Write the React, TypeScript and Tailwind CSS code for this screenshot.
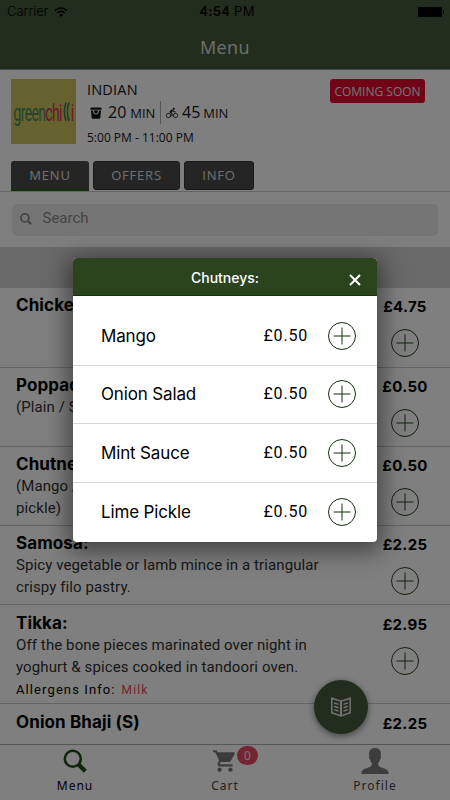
import { MdDirectionsBike, MdShoppingCart } from "react-icons/md";

type MenuItem = {
  name: string;
  price: string;
  lines: string[];
  allergens?: string;
  height: string;
};

const MENU_ITEMS: MenuItem[] = [
  { name: "Chicken Tikka:", price: "£4.75", lines: [], height: "h-[79.3px]" },
  { name: "Poppadom:", price: "£0.50", lines: ["(Plain / Spicy)"], height: "h-[79.3px]" },
  { name: "Chutneys:", price: "£0.50", lines: ["(Mango / Onion / Mint / Lime", "pickle)"], height: "h-[79.3px]" },
  {
    name: "Samosa:",
    price: "£2.25",
    lines: ["Spicy vegetable or lamb mince in a triangular", "crispy filo pastry."],
    height: "h-[79.3px]",
  },
  {
    name: "Tikka:",
    price: "£2.95",
    lines: ["Off the bone pieces marinated over night in", "yoghurt & spices cooked in tandoori oven."],
    allergens: "Milk",
    height: "h-[99px]",
  },
  { name: "Onion Bhaji (S)", price: "£2.25", lines: [], height: "h-[50px]" },
];

const CHUTNEYS = ["Mango", "Onion Salad", "Mint Sauce", "Lime Pickle"];

const PlusCircle = ({ className }: { className?: string }) => (
  <svg viewBox="0 0 28 28" className={`size-7 shrink-0 ${className ?? ""}`} fill="none" stroke="currentColor">
    <circle cx="14" cy="14" r="13.5" />
    <path d="M14 5.5v17M5.5 14h17" />
  </svg>
);

const WifiIcon = () => (
  <svg viewBox="0 0 14 10" className="h-[10px] w-[14px]" fill="none" stroke="black" strokeWidth="1.500">
    <path d="M1 3.600Q7-1.500 13 3.600M3.200 6q3.800-3.200 7.600 0" />
    <path d="M5 7.800q2-1.400 4 0L7 9.900z" fill="black" stroke="none" />
  </svg>
);

const BasketIcon = () => (
  <svg viewBox="0 0 12 12" className="size-3" fill="none">
    <path d="M.5 1.2Q.5.5 1.5.5h9q1 0 1 .7v1.6H.5z" fill="#111" />
    <path d="M1 3.5h10L10.3 11q-.1.8-1 .8H2.700q-.9 0-1-.8z" fill="#111" />
    <path d="M3.500 3.200Q3.500 7 6 7t2.500-3.800" stroke="#eee" strokeWidth="1.100" />
  </svg>
);

const MagnifierIcon = ({ className, ring = 2.5 }: { className?: string; ring?: number }) => (
  <svg viewBox="0 0 24 24" className={className} fill="none" stroke="currentColor">
    <circle cx="9.800" cy="9.800" r="8" strokeWidth={ring} />
    <path d="M15.300 15.300 22.300 22.300" strokeWidth="4.200" />
  </svg>
);

const PersonIcon = () => (
  <svg viewBox="0 0 28 26" className="h-[26px] w-7" fill="#7a7a7a">
    <path d="M14 0c3.700 0 6 2.200 5.900 5.800 0 1-.2 1.900-.1 2.400.5.500.2 2.200-.6 3-.4 1.600-1 2.700-1.900 3.600-.2 1.600 0 2.800 1 3.600 2.200 1.600 6.100 1.900 7.900 3.500 1 .9 1.400 2.300 1.500 4.100H.3c.1-1.800.5-3.200 1.500-4.100 1.800-1.600 5.700-1.900 7.900-3.500 1-.8 1.200-2 1-3.600-.9-.9-1.500-2-1.900-3.600-.8-.8-1.100-2.500-.6-3 .1-.5-.1-1.400-.1-2.400C8 2.200 10.300 0 14 0z" />
  </svg>
);

const BookIcon = () => (
  <svg viewBox="0 0 20 20" className="size-5" fill="none" stroke="#e6e6e6" strokeWidth="1.500">
    <path d="M.8 1.200 10 4.200l9.200-3v14.600L10 19 .8 15.800z" />
    <path d="M10 4.200V19" strokeWidth="2" />
    <path d="m3.200 6 4.300 1.400M3.200 9.300l4.300 1.400M3.200 12.600 7.500 14M16.800 6l-4.300 1.400M16.800 9.300l-4.300 1.400M16.800 12.600 12.500 14" />
  </svg>
);

const StatusBar = () => (
  <div className="grid h-[23px] grid-cols-3 items-center pl-[7px] pr-[6px] font-[Inter,sans-serif] text-[13px] text-black">
    <div className="flex items-center gap-[6px]">
      <span className="font-light">Carrier</span>
      <WifiIcon />
    </div>
    <div className="pl-[3px] text-center tracking-[0.3px]">
      <span className="font-semibold">4:54</span> PM
    </div>
    <div className="flex items-center justify-end gap-px">
      <div className="h-[10px] w-6 rounded-[1px] bg-black" />
      <div className="h-1 w-px rounded-r bg-black" />
    </div>
  </div>
);

const Logo = () => (
  <div className="flex h-[65px] w-[65px] shrink-0 items-center justify-center overflow-hidden bg-[#cac55e]">
    <div className="flex scale-y-[1.7] items-center font-[Roboto,sans-serif] text-[14px] leading-none tracking-[-0.650px]">
      <span className="text-[#4c8460]">green</span>
      <span className="text-[#d3324e]">chi</span>
      <svg viewBox="0 0 8 14" className="mx-px h-[12px] w-[7px]" fill="none" strokeWidth="1.800">
        <path d="M3.500.5Q-.5 7 3.500 13M7 .5Q3 7 7 13" stroke="#3c7858" />
      </svg>
      <span className="text-[#d3324e]">i</span>
    </div>
  </div>
);

const Restaurant = () => (
  <section className="flex h-[91px] items-start px-[11px] pt-[9px] font-['Open_Sans',sans-serif] text-[#151515]">
    <Logo />
    <div className="ml-[11px] flex-1">
      <div className="h-[22px] text-[14.5px] leading-[22px] tracking-[0.2px]">INDIAN</div>
      <div className="flex h-[23px] items-center text-[16px] leading-[23px]">
        <span className="ml-[3px]"><BasketIcon /></span>
        <span className="ml-[6px] flex w-[47px] items-baseline gap-1">20 <small className="text-[13px]">MIN</small></span>
        <span className="ml-[5px] h-[23px] w-px bg-[#aaa]" />
        <span className="ml-[5px]"><MdDirectionsBike size={12} /></span>
        <span className="ml-[4px] flex items-baseline gap-[3px]">45 <small className="text-[13px]">MIN</small></span>
      </div>
      <div className="mt-[3px] h-[22px] text-[12px] leading-[22px]">5:00 PM - 11:00 PM</div>
    </div>
    <div className="mr-[14px] flex h-6 w-[95px] items-center justify-center rounded-[3px] bg-[#e00b30] pt-px text-[12px] text-[#e8e8e8]">
      COMING SOON
    </div>
  </section>
);

const MenuRow = ({ item }: { item: MenuItem }) => (
  <div className={`flex shrink-0 justify-between overflow-hidden border-b border-[#c8c8c8] pl-4 pr-[23px] ${item.height}`}>
    <div className="whitespace-nowrap">
      <div className="mt-[6.200px] h-[22px] font-[Inter,sans-serif] text-[17px] font-bold leading-[22px] tracking-[0.1px] text-black">
        {item.name}
      </div>
      {item.lines.map((line) => (
        <div key={line} className="h-[22px] font-[Roboto,sans-serif] text-[15px] leading-[22px] tracking-[0.1px] text-[#303030]">
          {line}
        </div>
      ))}
      {item.allergens && (
        <div className="flex items-center gap-[6px] pt-px font-[Roboto,sans-serif] text-[13px] leading-[22px] tracking-[1.1px] text-black">
          Allergens Info: <span className="text-[12px] text-[#e8465a]">{item.allergens}</span>
        </div>
      )}
    </div>
    <div className="flex w-11 flex-col items-center font-[Inter,sans-serif]">
      <div className="mt-[9.200px] h-[20px] text-[15px] font-bold leading-[20px] tracking-[0.3px] text-black">{item.price}</div>
      <PlusCircle className="mt-[12px] text-[#21401a]" />
    </div>
  </div>
);

const ChutneyModal = () => (
  <div className="h-[284px] w-[304px] overflow-hidden rounded-[4px] bg-white shadow-[0_5px_24px_4px_rgba(0,0,0,0.5)]">
    <div className="grid h-[38px] grid-cols-[44px_1fr_44px] items-center border-b border-[#12340c] bg-[#2b441e] text-white">
      <span />
      <h2 className="pt-px text-center font-[Inter,sans-serif] text-[14px] font-medium">Chutneys:</h2>
      <svg viewBox="0 0 12 12" className="mt-[6px] ml-4 size-3" stroke="white" strokeWidth="2">
        <path d="m1 1 10 10M11 1 1 11" />
      </svg>
    </div>
    <div className="grid h-[246px] grid-rows-[70px_58px_59px_59px]">
      {CHUTNEYS.map((name) => (
        <div
          key={name}
          className="flex items-end border-b border-[#d8d8d8] pb-[15px] pl-7 pr-[21px] text-black last:border-b-0 last:pb-4"
        >
          <span className="flex-1 font-[Inter,sans-serif] text-[17px] leading-[28px] tracking-[-0.150px]">{name}</span>
          <span className="mr-[20px] font-[Roboto,sans-serif] text-[16px] leading-[29px] tracking-[0.8px]">£0.50</span>
          <PlusCircle className="text-[#12300d]" />
        </div>
      ))}
    </div>
  </div>
);

const TabBar = () => (
  <nav className="grid h-[56px] shrink-0 grid-cols-3 border-t border-[#aaa] bg-white pt-[3px] text-center font-['Noto_Sans',sans-serif] text-[12px] leading-[18px] tracking-[1px] text-[#444]">
    <div className="flex flex-col items-center text-black">
      <MagnifierIcon className="mt-px size-6 text-[#214d16]" />
      <span className="mt-1">Menu</span>
    </div>
    <div className="flex flex-col items-center">
      <div className="relative">
        <MdShoppingCart size={26} className="text-[#777]" />
        <span className="absolute -top-[2px] left-[25px] flex h-[19px] w-[21px] items-center justify-center rounded-full bg-[#e64d65] text-[12px] tracking-normal text-[#e8e8e8]">
          0
        </span>
      </div>
      <span className="mt-[3px]">Cart</span>
    </div>
    <div className="flex flex-col items-center">
      <PersonIcon />
      <span className="mt-[3px]">Profile</span>
    </div>
  </nav>
);

export default function App() {
  return (
    <div className="relative flex h-[800px] w-[450px] flex-col overflow-hidden bg-white">
      <header className="h-[70px] shrink-0 border-b border-[#8b98aa] bg-[#445a3a]">
        <StatusBar />
        <h1 className="pt-[11px] text-center font-['Open_Sans',sans-serif] text-[18px] leading-[26px] tracking-[0.4px] text-[#dedede]">
          Menu
        </h1>
      </header>

      <Restaurant />

      <div className="flex h-[31px] shrink-0 items-start gap-1 border-b border-[#ccc] pl-[11px] font-['Open_Sans',sans-serif] text-[13px] tracking-[0.8px] text-[#e0e0e0]">
        <div className="flex h-[30px] w-[78px] items-center justify-center rounded-t-[3px] border-b-2 border-[#285c18] bg-[#4a4a4a] pt-[2px]">MENU</div>
        <div className="flex h-[29px] w-[87px] items-center justify-center rounded-[3px] border border-[#333] bg-[#4a4a4a] pt-px">OFFERS</div>
        <div className="flex h-[29px] w-[70px] items-center justify-center rounded-[3px] border border-[#333] bg-[#4a4a4a] pt-px">INFO</div>
      </div>

      <div className="h-[55px] shrink-0 px-[11.500px] pt-3">
        <div className="flex h-8 w-[426px] items-center rounded-[5px] bg-[#ebebeb] pl-2 text-[#888]">
          <MagnifierIcon className="mb-[2px] size-3" ring={3.6} />
          <span className="ml-[11px] pb-1 font-[Roboto,sans-serif] text-[15px]">Search</span>
        </div>
      </div>

      <div className="h-[41.300px] shrink-0 bg-[#d2d2d2]" />

      <main className="min-h-0 flex-1 overflow-hidden">
        {MENU_ITEMS.map((item) => (
          <MenuRow key={item.name} item={item} />
        ))}
      </main>

      <div className="absolute left-[314px] top-[680px] flex size-[54px] items-center justify-center rounded-full bg-[#445a3a] shadow-[0_2px_7px_rgba(0,0,0,0.5)]">
        <BookIcon />
      </div>

      <TabBar />

      <div className="absolute inset-0 flex items-center justify-center bg-black/50">
        <ChutneyModal />
      </div>
    </div>
  );
}
